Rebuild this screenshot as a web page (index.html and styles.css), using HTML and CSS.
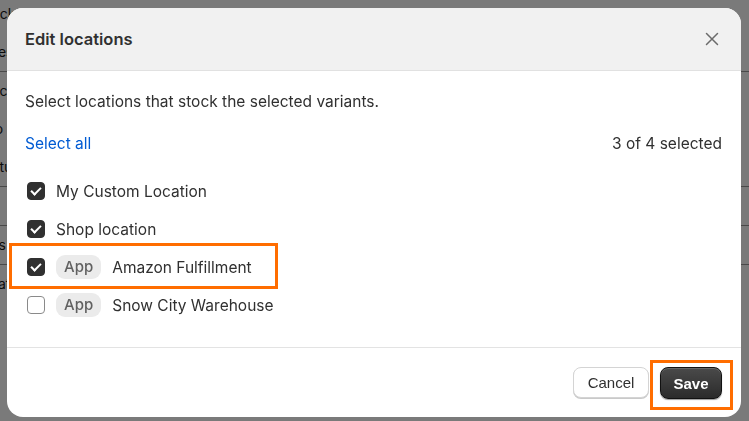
FILE: index.html
```html
<!DOCTYPE html>
<html lang="en">
<head>
<meta charset="UTF-8" />
<title>Edit locations</title>
<link rel="stylesheet" href="styles.css">
</head>
<body>

<div class="page">
  <div class="page-line top">Stock</div>
  <div class="page-line">Sizes</div>
  <div class="page-rule"></div>
  <div class="page-line">Track</div>
  <div class="page-line">Info</div>
  <div class="page-line">Status</div>
  <div class="page-rule"></div>
  <div class="page-line">Sic</div>
  <div class="page-rule"></div>
  <div class="page-line">Plus</div>
  <div class="page-rule"></div>
  <div class="page-line">location</div>
</div>

<div class="backdrop">
  <div class="modal">
    <div class="modal-header">
      <h2>Edit locations</h2>
      <span class="close-btn" title="Close">
        <svg width="14" height="14" viewBox="0 0 14 14"><path d="M1.5 1.5 L12.5 12.5 M12.5 1.5 L1.5 12.5" stroke="#6b6b6b" stroke-width="1.5" stroke-linecap="round"/></svg>
      </span>
    </div>

    <div class="modal-body">
      <p class="intro">Select locations that stock the selected variants.</p>

      <div class="select-row">
        <a class="select-all" href="#">Select all</a>
        <span class="count">3 of 4 selected</span>
      </div>

      <div class="locations">
        <label class="location">
          <span class="check on"></span>
          <span>My Custom Location</span>
        </label>
        <label class="location">
          <span class="check on"></span>
          <span>Shop location</span>
        </label>
        <label class="location highlight">
          <span class="check on"></span>
          <span class="badge">App</span>
          <span>Amazon Fulfillment</span>
        </label>
        <label class="location">
          <span class="check"></span>
          <span class="badge">App</span>
          <span>Snow City Warehouse</span>
        </label>
      </div>
    </div>

    <div class="modal-footer">
      <button class="btn cancel">Cancel</button>
      <span class="save-wrap"><button class="btn save">Save</button></span>
    </div>
  </div>
</div>

</body>
</html>
```

FILE: styles.css
```css
body {
  margin: 0;
  font-family: 'Inter', 'Liberation Sans', sans-serif;
  color: #303030;
  background: #fff;
  overflow: hidden;
}
.page {
  margin-left: -22px;
  font-size: 14px;
  color: #1a1a1a;
}
.page-line {
  padding: 11px 0;
  line-height: 16px;
}
.page-line.top {
  padding-top: 6px;
}
.page-rule {
  height: 1px;
  background: #999;
}
.backdrop {
  position: fixed;
  inset: 0;
  background: rgba(0, 0, 0, 0.52);
  padding: 8px 8px 4px 7px;
  display: flex;
}
.modal {
  flex: 1;
  background: #fff;
  border-radius: 16px;
  overflow: hidden;
  display: flex;
  flex-direction: column;
}
.modal-header {
  background: #f1f1f1;
  border-bottom: 1px solid #e1e1e1;
  height: 62px;
  padding: 0 22px 0 18px;
  display: flex;
  align-items: center;
  justify-content: space-between;
}
.modal-header h2 {
  margin: 0;
  font-size: 16.5px;
  font-weight: 600;
  color: #303030;
}
.close-btn {
  display: flex;
  cursor: pointer;
}
.modal-body {
  flex: 1;
  padding: 21px 19px 0 18px;
  border-bottom: 1px solid #e3e3e3;
}
.intro {
  margin: 0;
  font-size: 15.5px;
  line-height: 20px;
}
.select-row {
  margin-top: 22px;
  display: flex;
  justify-content: space-between;
  font-size: 15.5px;
  line-height: 20px;
}
.select-all {
  color: #005bd3;
  text-decoration: none;
}
.count {
  color: #303030;
}
.locations {
  margin-top: 25px;
  display: flex;
  flex-direction: column;
  gap: 14px;
}
.location {
  display: flex;
  align-items: center;
  gap: 11px;
  height: 24px;
  margin-left: 2px;
  font-size: 15.5px;
  color: #303030;
  position: relative;
}
.location.highlight::before {
  content: '';
  position: absolute;
  left: -18px;
  top: -12px;
  width: 263px;
  height: 40px;
  border: 3px solid #ff6d00;
}
.check {
  width: 16px;
  height: 16px;
  border: 1.5px solid #8a8a8a;
  border-radius: 4px;
  background: #fff;
  display: flex;
  align-items: center;
  justify-content: center;
}
.check.on {
  background: #303030;
  border-color: #303030;
}
.check.on::after {
  content: '';
  width: 4px;
  height: 8px;
  border: solid #fff;
  border-width: 0 2px 2px 0;
  transform: translate(0, -1px) rotate(45deg);
}
.badge {
  background: #ebebeb;
  color: #616161;
  border-radius: 9px;
  padding: 0 8px;
  line-height: 24px;
  font-size: 15px;
  font-weight: 500;
}
.modal-footer {
  height: 69px;
  padding-right: 8px;
  display: flex;
  align-items: center;
  justify-content: flex-end;
  gap: 1px;
}
.btn {
  font-family: 'Liberation Sans', sans-serif;
  font-size: 15px;
  border-radius: 8px;
  cursor: pointer;
}
.cancel {
  width: 76px;
  height: 31px;
  background: #fff;
  border: 1px solid #d4d4d4;
  color: #303030;
  box-shadow: 0 1px 0 #c9c9c9;
}
.save-wrap {
  border: 3px solid #ff6d00;
  padding: 4px 8px 8px 7px;
  margin-top: 5px;
}
.save {
  display: block;
  width: 62px;
  height: 32px;
  border: 1px solid #111;
  background: linear-gradient(#4a4a4a, #2b2b2b);
  color: #fff;
  font-weight: bold;
  box-shadow: inset 0 1px 0 #666, 0 1px 1px rgba(0,0,0,0.4);
}
```
